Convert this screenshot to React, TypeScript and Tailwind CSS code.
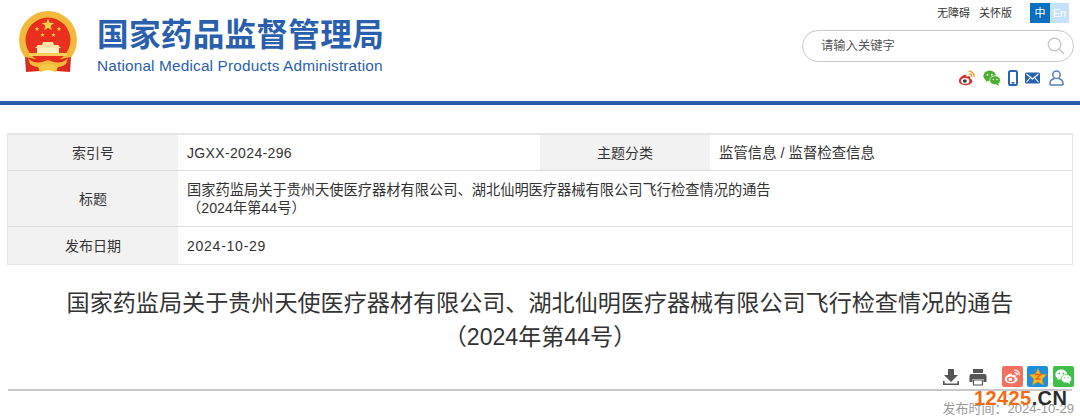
import React from "react";

const cjk = "font-['Liberation_Sans','Noto_Sans_CJK_SC',sans-serif]";

function star(cx: number, cy: number, r: number) {
  const pts: string[] = [];
  for (let i = 0; i < 10; i++) {
    const rad = i % 2 === 0 ? r : r * 0.42;
    const a = -Math.PI / 2 + (i * Math.PI) / 5;
    pts.push(`${(cx + rad * Math.cos(a)).toFixed(2)},${(cy + rad * Math.sin(a)).toFixed(2)}`);
  }
  return pts.join(" ");
}

function Emblem() {
  return (
    <svg width="60" height="62" viewBox="0 0 60 62" className="shrink-0">
      <circle cx="30" cy="29" r="29" fill="#f3b93a" />
      <circle cx="30" cy="29" r="22.500" fill="#e9301f" />
      <g fill="#f7d548">
        <polygon points={star(30, 14, 6.5)} />
        <polygon points={star(19, 18, 2.4)} />
        <polygon points={star(41, 18, 2.4)} />
        <polygon points={star(24.500, 24, 2.2)} />
        <polygon points={star(35.500, 24, 2.2)} />
      </g>
      <path d="M25 31h10l1 3h4l3 3H17l3-3h4z" fill="#fbe4a6" />
      <rect x="19" y="37" width="22" height="5" fill="#fff0c4" />
      <rect x="11" y="42" width="38" height="3" fill="#f7cf58" />
      <path d="M7 46 L8 61 L22 60 L27 50 Z M53 46 L52 61 L38 60 L33 50 Z" fill="#dc2a1e" />
      <path d="M10 47 C15 53 23 52 30 49 C37 52 45 53 50 47 L48 53 C43 57 36 57 30 54 C24 57 17 57 12 53Z" fill="#f3b93a" />
      <path d="M20 56 Q30 50 40 56 L38 61 L30 59 L22 61Z" fill="#f6c944" />
    </svg>
  );
}

function Search() {
  return (
    <svg width="18" height="18" viewBox="0 0 18 18" fill="none" stroke="#c4c4c4" strokeWidth="1.2">
      <circle cx="7.500" cy="7.500" r="6.300" />
      <path d="M12 12 L17 17" strokeWidth="1.600" />
    </svg>
  );
}

function Weibo({ color = "#d6322c", size = 18 }: { color?: string; size?: number }) {
  return (
    <svg width={size} height={size} viewBox="0 0 20 20" fill="none">
      <path d="M8.200 6.200C4.600 7.100 1 10.600 1 13.400 1 16.200 4.600 18 8.400 18c4.400 0 7.600-2.500 7.600-4.700 0-1.500-1.300-2.200-2.400-2.500.5-1.400.2-2.600-1.500-2.800-1 0-2.200.5-2.700.7.3-1.600-.3-3-2.200-2.500Z" fill={color} />
      <ellipse cx="8" cy="13.200" rx="4.600" ry="3.300" fill={color === "#fff" ? "#f2705f" : "#fff"} />
      <ellipse cx="7.600" cy="13.400" rx="2.200" ry="1.900" fill={color === "#fff" ? "#fff" : "#3a3a3a"} />
      <path d="M12.500 2.500c3 0 5.500 2.400 5.500 5.500M12.800 5.400c1.400 0 2.600 1.100 2.600 2.600" stroke={color === "#fff" ? "#fff" : "#f0a020"} strokeWidth="1.600" strokeLinecap="round" />
    </svg>
  );
}

function Wechat({ color = "#4cae2e", cut = "#fff", size = 18 }: { color?: string; cut?: string; size?: number }) {
  return (
    <svg width={size} height={size} viewBox="0 0 20 20">
      <ellipse cx="7.400" cy="7.600" rx="7" ry="5.800" fill={color} />
      <path d="M3.400 11 L3 14.400 L6.600 12.600Z" fill={color} />
      <ellipse cx="13.400" cy="12.600" rx="6" ry="5" fill={color} stroke={cut} strokeWidth="0.800" />
      <path d="M17 16 L17.600 18.800 L14.600 17.200Z" fill={color} />
      <circle cx="5" cy="6.400" r="1" fill={cut} />
      <circle cx="9.800" cy="6.400" r="1" fill={cut} />
      <circle cx="11.400" cy="11.600" r="0.800" fill={cut} />
      <circle cx="15.400" cy="11.600" r="0.800" fill={cut} />
    </svg>
  );
}

function Phone() {
  return (
    <svg width="10" height="16" viewBox="0 0 10 16">
      <rect x="1" y="1" width="8" height="14" rx="1.600" fill="#fff" stroke="#2a64b0" strokeWidth="2" />
      <rect x="3.500" y="12" width="3" height="1.600" fill="#2a64b0" />
    </svg>
  );
}

function Mail() {
  return (
    <svg width="15" height="12" viewBox="0 0 15 12">
      <rect x="0" y="0.500" width="15" height="11" rx="1.500" fill="#2a64b0" />
      <path d="M1.500 2 L7.500 7 L13.500 2 M1.500 10 L5.500 5.500 M13.500 10 L9.500 5.500" stroke="#fff" strokeWidth="1.100" fill="none" />
    </svg>
  );
}

function User() {
  return (
    <svg width="15" height="16" viewBox="0 0 15 16" fill="none" stroke="#5a7fc0" strokeWidth="1.500">
      <circle cx="7.500" cy="4.700" r="3.700" />
      <path d="M1 15v-1.500C1 10.500 3.500 9 5.500 8.500M14 15v-1.500C14 10.500 11.500 9 9.500 8.500M1 15h13" />
    </svg>
  );
}

function Download() {
  return (
    <svg width="18" height="18" viewBox="0 0 18 18" fill="#555">
      <path d="M6 1h6v6h4l-7 7-7-7h4z" />
      <path d="M1 13v4h16v-4h-1.600v2.400H2.600V13z" />
    </svg>
  );
}

function Printer() {
  return (
    <svg width="18" height="18" viewBox="0 0 18 18" fill="#555">
      <path d="M4 1h10v4H4z" />
      <path d="M2.500 6h13A2 2 0 0 1 17.500 8v6h-3v-3h-11v3h-3V8a2 2 0 0 1 2-2z" />
      <path d="M4.500 12h9v5h-9z" fill="#fff" stroke="#555" strokeWidth="1.200" />
    </svg>
  );
}

function QZone() {
  return (
    <svg width="18" height="18" viewBox="0 0 18 18">
      <path d="M9 0.500l2.600 5.600 6 .7-4.400 4.100 1.200 6L9 14l-5.400 2.900 1.200-6L.4 6.800l6-.7z" fill="#f6b51e" stroke="#e08a10" strokeWidth="0.500" />
      <path d="M6 6.500h6L7 11h4.500" stroke="#e8641b" strokeWidth="1.300" fill="none" />
    </svg>
  );
}

function Label({ children }: { children: React.ReactNode }) {
  return <div className="flex w-[170px] shrink-0 items-center justify-center bg-[#f2f2f2] pt-[2px] text-[#333]">{children}</div>;
}

export default function App() {
  return (
    <div className={`relative h-[420px] w-[1080px] overflow-hidden bg-white ${cjk}`}>
      <header className="flex h-[101px] items-start justify-between pl-[18px]">
        <div className="flex items-start pt-[11px]">
          <Emblem />
          <div className="ml-[19px] flex flex-col text-[#2a5fae]">
            <div className="mt-[5px] text-[31.600px] font-bold leading-[38px] tracking-[0.3px]">国家药品监督管理局</div>
            <div className="mt-[3px] text-[15.400px] leading-[18px] tracking-[0.15px]">National Medical Products Administration</div>
          </div>
        </div>
        <div className="flex w-[278px] flex-col pt-[3px]">
          <div className="flex h-[20px] items-center justify-end pr-[11px] text-[11px] text-[#333]">
            <span>无障碍</span>
            <span className="ml-[9px]">关怀版</span>
            <div className="ml-[18px] flex">
              <span className="flex h-[20px] w-[20px] items-center justify-center bg-[#0a6fc0] text-white">中</span>
              <span className="flex h-[20px] w-[19px] items-center justify-center bg-[#c6e2fa] text-white">En</span>
            </div>
          </div>
          <div className="mt-[7px] flex h-[32px] w-[272px] items-center justify-between rounded-full border border-[#c9c9c9] pl-[18px] pr-[8px] text-[12.300px] text-[#555]">
            <span>请输入关键字</span>
            <Search />
          </div>
          <div className="mt-[7px] flex h-[17px] w-[272px] items-center justify-end pr-[10px]">
            <Weibo />
            <span className="ml-[7px] flex"><Wechat /></span>
            <span className="ml-[7px] flex"><Phone /></span>
            <span className="ml-[7px] flex items-center"><Mail /></span>
            <span className="ml-[9px] flex"><User /></span>
          </div>
        </div>
      </header>
      <div className="h-[4px] bg-[#2a5caa]" />

      <div className="mx-[7px] mt-[28px] flex h-[132px] flex-col border border-t-2 border-[#e6e6e6] text-[14px]">
        <div className="flex h-[36px] border-b border-[#dcdcdc]">
          <div className="flex w-[532px]">
            <Label>索引号</Label>
            <div className="flex flex-1 items-center pl-[9px] pt-[2px] tracking-[0.35px] text-[#333]">JGXX-2024-296</div>
          </div>
          <div className="flex flex-1">
            <Label>主题分类</Label>
            <div className="flex flex-1 items-center pl-[9px] pt-[2px] text-[14.400px] text-[#333]">监管信息 / 监督检查信息</div>
          </div>
        </div>
        <div className="flex h-[56px] border-b border-[#dcdcdc]">
          <Label>标题</Label>
          <div className="flex flex-1 flex-col justify-center pl-[9px] text-[14.240px] leading-[18px] text-[#333]">
            <div>国家药监局关于贵州天使医疗器材有限公司、湖北仙明医疗器械有限公司飞行检查情况的通告</div>
            <div>（2024年第44号）</div>
          </div>
        </div>
        <div className="flex flex-1">
          <Label>发布日期</Label>
          <div className="flex flex-1 items-center pl-[9px] pt-[2px] tracking-[0.75px] text-[#333]">2024-10-29</div>
        </div>
      </div>

      <div className="mt-[21px] text-center text-[23.100px] leading-[34px] text-[#333]">
        <div>国家药监局关于贵州天使医疗器材有限公司、湖北仙明医疗器械有限公司飞行检查情况的通告</div>
        <div>（2024年第44号）</div>
      </div>

      <div className="mt-[11px] flex h-[23px] items-center justify-end pr-[6px]">
        <Download />
        <span className="ml-[9px] flex"><Printer /></span>
        <span className="ml-[15px] flex h-[21px] w-[21px] items-center justify-center rounded-[2px] bg-[#f2705f]"><Weibo color="#fff" size={17} /></span>
        <span className="ml-[4px] flex h-[21px] w-[21px] items-center justify-center rounded-[2px] bg-[#1d8fdc]"><QZone /></span>
        <span className="ml-[5px] flex h-[21px] w-[21px] items-center justify-center rounded-[2px] bg-[#3fbf4a]"><Wechat color="#fff" cut="#3fbf4a" size={17} /></span>
      </div>
      <div className="mx-[8px] mt-[1px] h-[2px] bg-[#c8c8c8]" />
      <div className="mt-[10px] pr-[6px] text-right text-[13px] leading-[16px] text-[#999]">发布时间：2024-10-29</div>

      <div className="absolute left-[974px] top-[386px] font-['Liberation_Sans',sans-serif] text-[20px] font-bold leading-[24px] tracking-[0.4px]">
        <span className="text-[#f26a12]">12425</span>
        <span className="text-[#2c2c2c]">.CN</span>
      </div>
    </div>
  );
}
